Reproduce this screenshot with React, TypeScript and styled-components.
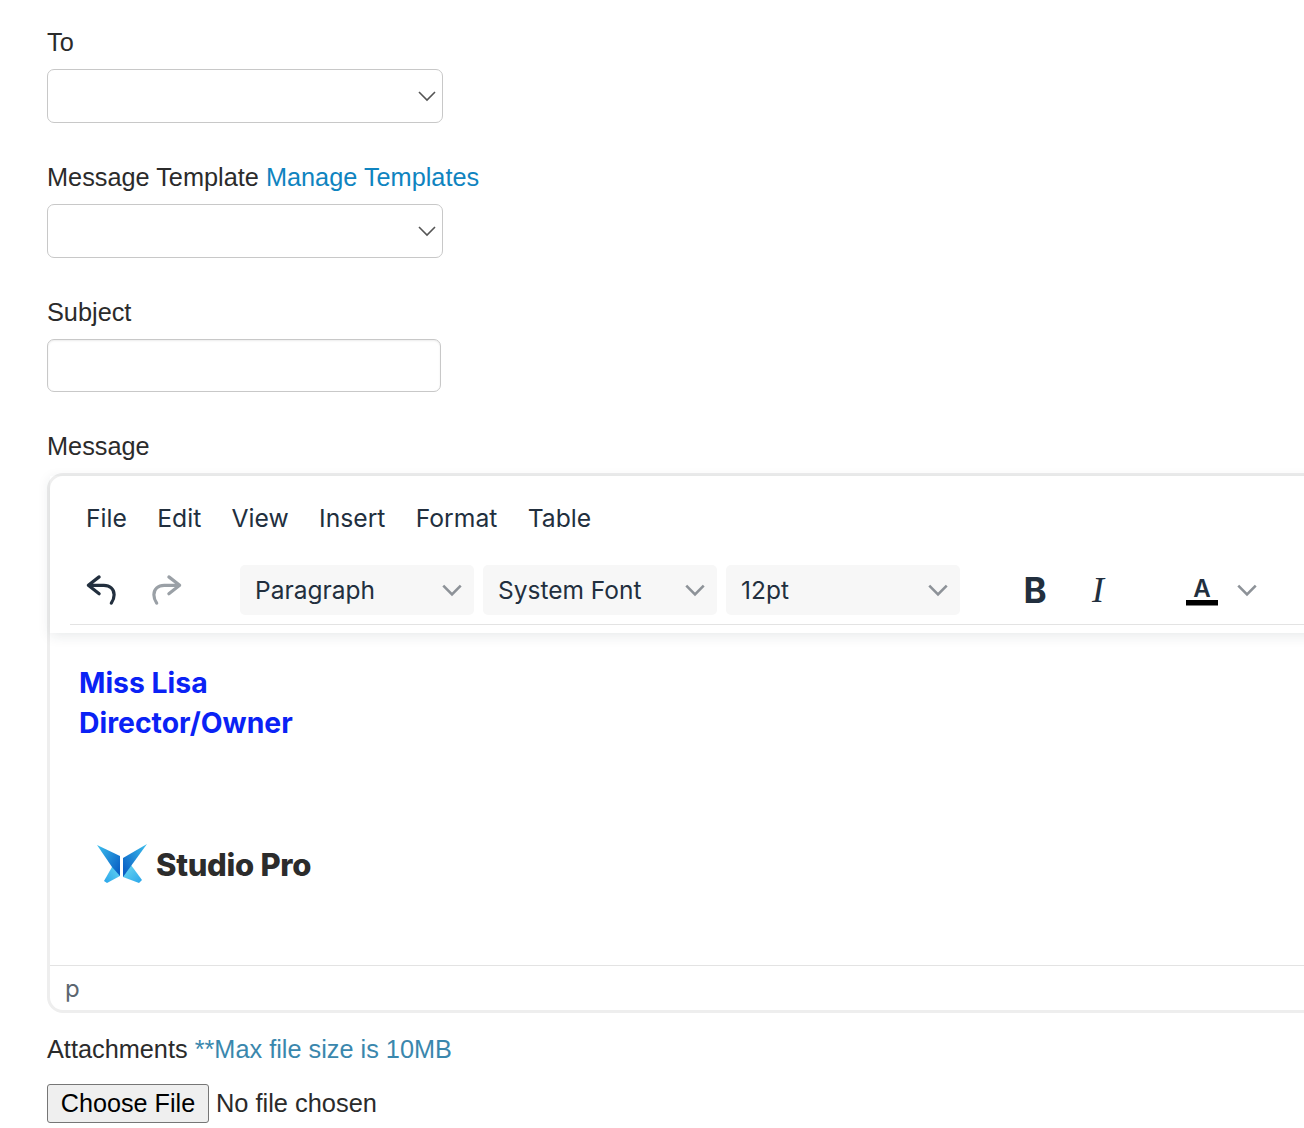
import React from 'react';
import styled, { createGlobalStyle } from 'styled-components';

const GlobalStyle = createGlobalStyle`
  html, body {
    margin: 0;
    padding: 0;
    background: #fff;
  }
  body {
    font-family: "Liberation Sans", Arial, sans-serif;
    color: #2b2b2b;
  }
`;

const Page = styled.div`
  width: 1304px;
  height: 1128px;
  overflow: hidden;
  box-sizing: border-box;
  padding: 24px 0 0 47px;
`;

const Field = styled.div`
  margin-bottom: 36px;
`;

const Label = styled.div<{ $gap?: number }>`
  font-size: 25.3px;
  line-height: 37px;
  margin-bottom: ${p => p.$gap ?? 8}px;
  color: #2b2b2b;
`;

const TemplateLink = styled.a`
  color: #0f84c0;
  text-decoration: none;
`;

const Hint = styled.span`
  color: #3a87ad;
`;

const SelectBox = styled.div`
  width: 396px;
  height: 54px;
  box-sizing: border-box;
  border: 1px solid #c8c8c8;
  border-radius: 7px;
  display: flex;
  align-items: center;
  justify-content: flex-end;
  padding-right: 4px;
  background: #fff;
`;

const TextInput = styled.div`
  width: 394px;
  height: 53px;
  box-sizing: border-box;
  border: 1px solid #c8c8c8;
  border-radius: 7px;
  background: #fff;
  box-shadow: inset 0 1px 2px rgba(0, 0, 0, 0.08);
`;

const Editor = styled.div`
  width: 1400px;
  height: 540px;
  box-sizing: border-box;
  border: 3px solid #eeeeee;
  border-radius: 16px;
  display: flex;
  flex-direction: column;
  margin-bottom: 18px;
`;

const Header = styled.div`
  height: 157px;
  box-sizing: border-box;
  padding: 0 0 8px 20px;
  flex: none;
  box-shadow: 0 3px 12px rgba(34, 47, 62, 0.1);
  font-family: Inter, "Liberation Sans", sans-serif;
  color: #222f3e;
`;

const MenuBar = styled.div`
  display: flex;
  height: 89px;
  align-items: center;
  gap: 30.3px;
  font-size: 24.7px;
  box-sizing: border-box;
  padding: 0 0 5px 16px;
`;

const ToolBar = styled.div`
  display: flex;
  align-items: center;
  height: 60px;
  box-sizing: border-box;
  padding-bottom: 9px;
  border-bottom: 1px solid #e3e3e3;
`;

const IconSlot = styled.div<{ $width: number }>`
  width: ${p => p.$width}px;
  flex: none;
  display: flex;
  align-items: center;
  justify-content: center;
`;

const Dropdown = styled.div<{ $width: number }>`
  width: ${p => p.$width}px;
  height: 50px;
  flex: none;
  box-sizing: border-box;
  margin-right: 9px;
  padding: 0 10px 0 15px;
  background: #f7f7f7;
  border-radius: 5px;
  display: flex;
  align-items: center;
  justify-content: space-between;
  font-size: 24.5px;
  color: #222f3e;
`;

const Content = styled.div`
  flex: 1;
  padding: 30px 0 0 29px;
  font-family: Inter, "Liberation Sans", sans-serif;
`;

const Signature = styled.div`
  font-size: 28.35px;
  line-height: 40px;
  font-weight: 700;
  color: #0a22f5;
`;

const LogoRow = styled.div`
  display: flex;
  align-items: center;
  gap: 8px;
  margin: 100px 0 0 17px;
`;

const LogoText = styled.span`
  font-family: Inter, "Liberation Sans", sans-serif;
  font-size: 31px;
  font-weight: 800;
  letter-spacing: -0.3px;
  color: #2c2c2c;
`;

const StatusBar = styled.div`
  height: 45px;
  flex: none;
  box-sizing: border-box;
  border-top: 1px solid #e3e3e3;
  padding-left: 15px;
  font-family: Inter, "Liberation Sans", sans-serif;
  font-size: 24px;
  line-height: 46px;
  color: #5c6670;
`;

const FileRow = styled.div`
  display: flex;
  align-items: center;
  gap: 7px;
  font-size: 25.4px;
`;

const FileButton = styled.button`
  width: 162px;
  height: 39px;
  padding: 0;
  background: #efefef;
  border: 1px solid #767676;
  border-radius: 3px;
  font-family: "Liberation Sans", Arial, sans-serif;
  font-size: 25.2px;
  color: #000;
`;

const Chevron: React.FC<{ color?: string; size?: number; width?: number }> = ({
  color = '#555',
  size = 22,
  width = 1.6,
}) => (
  <svg width={size} height={size} viewBox="0 0 22 22" fill="none">
    <path d="M3 7l8 8 8-8" stroke={color} strokeWidth={width} />
  </svg>
);

const ToolChevron = () => <Chevron color="#8d9298" size={24} width={2.4} />;

const UndoIcon: React.FC<{ color: string; flip?: boolean }> = ({ color, flip }) => (
  <svg
    width="30"
    height="32"
    viewBox="0 0 32 32"
    fill="none"
    style={flip ? { transform: 'scaleX(-1)' } : undefined}
  >
    <path
      d="M14 2L2.500 11 14 20M3 11h16c6.500 0 11 4 11 10 0 3-1 6-3 9"
      stroke={color}
      strokeWidth="3.400"
      strokeLinecap="round"
      strokeLinejoin="round"
    />
  </svg>
);

const ColorIcon = () => (
  <svg width="34" height="34" viewBox="0 0 34 34">
    <text x="17" y="24" textAnchor="middle" fontFamily="Inter, sans-serif" fontSize="24" fontWeight="600" fill="#222f3e">
      A
    </text>
    <rect x="1" y="27" width="32" height="5.500" fill="#000" />
  </svg>
);

const BoldGlyph = styled.span`
  font-family: Inter, "Liberation Sans", sans-serif;
  font-size: 35px;
  font-weight: 700;
  color: #222f3e;
`;

const ItalicGlyph = styled.span`
  font-family: "Liberation Serif", serif;
  font-size: 36px;
  font-style: italic;
  color: #222f3e;
`;

const LogoMark = () => (
  <svg width="52" height="42" viewBox="0 0 52 42">
    <defs>
      <linearGradient id="wingLeft" x1="0" y1="0" x2="1" y2="0.8">
        <stop offset="0" stopColor="#3cc0ee" />
        <stop offset="1" stopColor="#0a5fc4" />
      </linearGradient>
      <linearGradient id="wingRight" x1="1" y1="0" x2="0" y2="0.8">
        <stop offset="0" stopColor="#3cc0ee" />
        <stop offset="1" stopColor="#0a5fc4" />
      </linearGradient>
      <linearGradient id="legLeft" x1="1" y1="0" x2="0" y2="1">
        <stop offset="0" stopColor="#6fdcf2" />
        <stop offset="1" stopColor="#28a4ea" />
      </linearGradient>
      <linearGradient id="legRight" x1="0" y1="0" x2="1" y2="1">
        <stop offset="0" stopColor="#6fdcf2" />
        <stop offset="1" stopColor="#28a4ea" />
      </linearGradient>
    </defs>
    <path d="M24 18L24 33 11 40 8 38 16 24z" fill="url(#legLeft)" />
    <path d="M27 24L35 22 46 37 43 40 27 34z" fill="url(#legRight)" />
    <path d="M1 2L24 13 24 33 16 24z" fill="url(#wingLeft)" />
    <path d="M51 1L27 15 27 34 35 23z" fill="url(#wingRight)" />
  </svg>
);

export default function App() {
  const menus = ['File', 'Edit', 'View', 'Insert', 'Format', 'Table'];

  return (
    <>
      <GlobalStyle />
      <Page>
        <Field>
          <Label>To</Label>
          <SelectBox>
            <Chevron />
          </SelectBox>
        </Field>
        <Field>
          <Label>
            Message Template <TemplateLink>Manage Templates</TemplateLink>
          </Label>
          <SelectBox>
            <Chevron />
          </SelectBox>
        </Field>
        <Field>
          <Label>Subject</Label>
          <TextInput />
        </Field>
        <Label>Message</Label>
        <Editor>
          <Header>
            <MenuBar>
              {menus.map(m => (
                <span key={m}>{m}</span>
              ))}
            </MenuBar>
            <ToolBar>
              <IconSlot $width={62}>
                <UndoIcon color="#222f3e" />
              </IconSlot>
              <IconSlot $width={70}>
                <UndoIcon color="#9aa0a6" flip />
              </IconSlot>
              <IconSlot $width={38} />
              <Dropdown $width={234}>
                Paragraph <ToolChevron />
              </Dropdown>
              <Dropdown $width={234}>
                System Font <ToolChevron />
              </Dropdown>
              <Dropdown $width={234}>
                12pt <ToolChevron />
              </Dropdown>
              <IconSlot $width={33} />
              <IconSlot $width={66}>
                <BoldGlyph>B</BoldGlyph>
              </IconSlot>
              <IconSlot $width={60}>
                <ItalicGlyph>I</ItalicGlyph>
              </IconSlot>
              <IconSlot $width={54} />
              <IconSlot $width={40}>
                <ColorIcon />
              </IconSlot>
              <IconSlot $width={50}>
                <ToolChevron />
              </IconSlot>
            </ToolBar>
          </Header>
          <Content>
            <Signature>
              Miss Lisa
              <br />
              Director/Owner
            </Signature>
            <LogoRow>
              <LogoMark />
              <LogoText>Studio Pro</LogoText>
            </LogoRow>
          </Content>
          <StatusBar>p</StatusBar>
        </Editor>
        <Label $gap={16}>
          Attachments <Hint>**Max file size is 10MB</Hint>
        </Label>
        <FileRow>
          <FileButton>Choose File</FileButton>
          <span>No file chosen</span>
        </FileRow>
      </Page>
    </>
  );
}
